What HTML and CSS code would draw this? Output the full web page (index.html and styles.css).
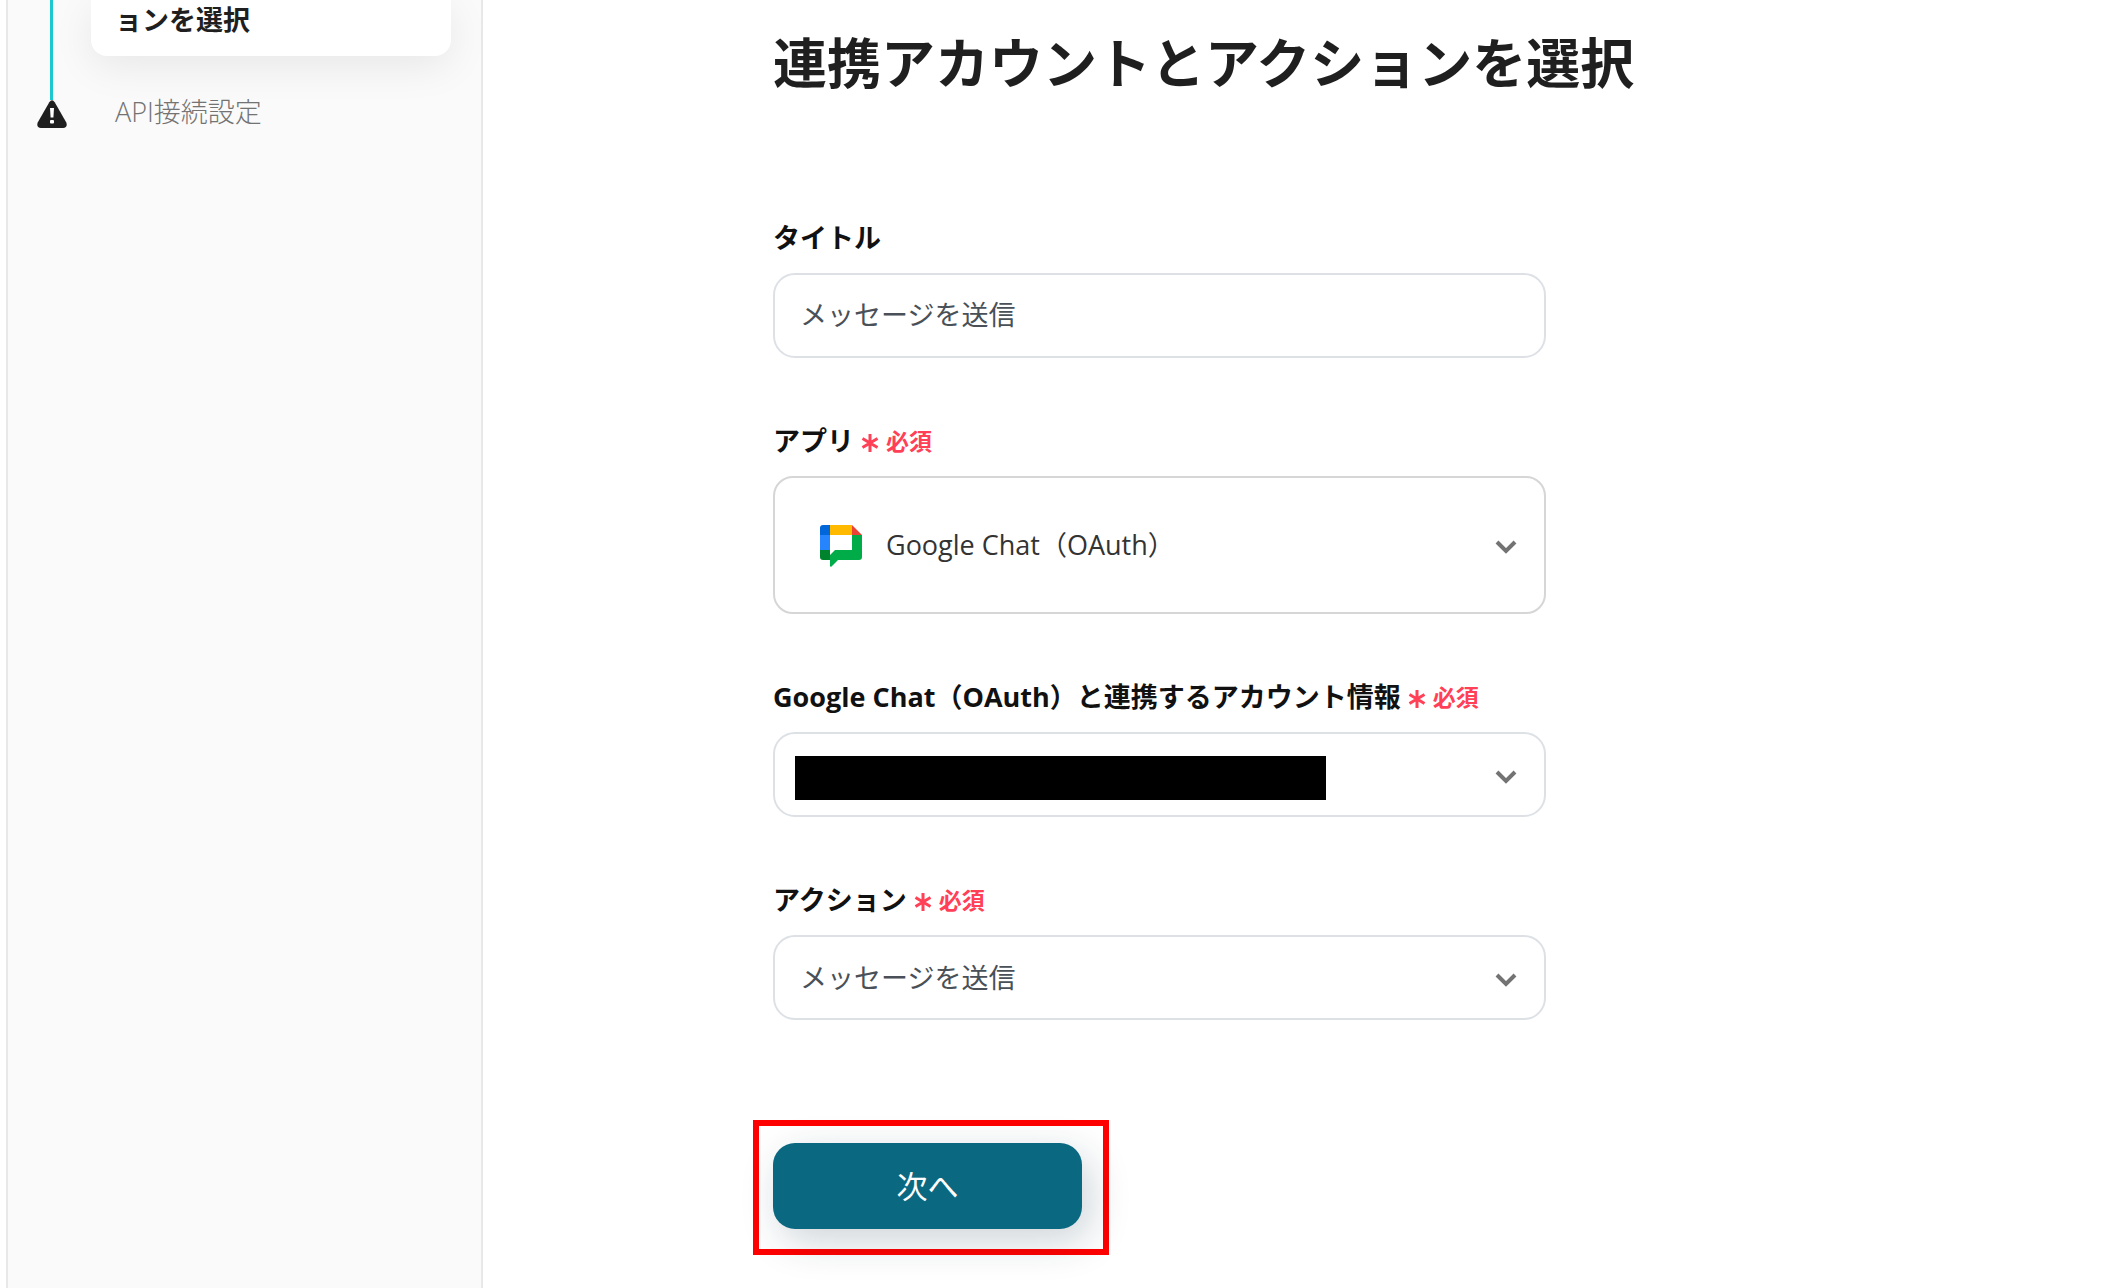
FILE: index.html
```html
<!DOCTYPE html>
<html lang="ja">
<head>
<meta charset="utf-8">
<meta name="viewport" content="width=device-width, initial-scale=1">
<title>連携アカウントとアクションを選択</title>
<link rel="stylesheet" href="styles.css">
</head>
<body>
<div class="page">
  <aside class="sidebar">
    <ol class="steps">
      <li class="step step-current">
        <span class="step-line"></span>
        <span class="step-card">ョンを選択</span>
      </li>
      <li class="step">
        <span class="step-marker">
          <span class="step-line step-line-end"></span>
          <svg class="warning-icon" viewBox="0 0 30 28" aria-hidden="true">
            <path d="M12.300 2.200Q15-1.600 17.700 2.200L29.300 22.500Q31 27.500 26 28H4Q-1 27.500 .700 22.500Z" fill="#1f1f1f"/>
            <path d="M13 8h4l-.600 9.500h-2.800z" fill="#fff"/>
            <rect x="13" y="20" width="4" height="3.500" rx="1" fill="#fff"/>
          </svg>
        </span>
        <span class="step-name">API接続設定</span>
      </li>
    </ol>
  </aside>
  <main class="main">
    <h1 class="heading">連携アカウントとアクションを選択</h1>
    <form class="form">
      <div class="field">
        <label class="label" for="title">タイトル</label>
        <input class="control control-text" id="title" type="text" value="メッセージを送信">
      </div>
      <div class="field">
        <label class="label" for="app">アプリ<span class="required"><svg class="asterisk" viewBox="0 0 18 20" aria-hidden="true"><path d="M9 1v18M1.500 5.500l15 9M16.500 5.500l-15 9"/></svg>必須</span></label>
        <div class="select">
          <select class="control control-app" id="app"><option>Google Chat（OAuth）</option></select>
          <svg class="app-logo" viewBox="0 0 42 42" aria-hidden="true">
            <path d="M0 10V3Q0 0 3 0H10V10Z" fill="#0066da"/>
            <path d="M0 10H10V25H0Z" fill="#2684fc"/>
            <path d="M10 0H32V10H10Z" fill="#ffba00"/>
            <path d="M32 0L42 10H32Z" fill="#ea4335"/>
            <path d="M0 25H10V35H3Q0 35 0 32Z" fill="#00832d"/>
            <path d="M32 10H42V32Q42 35 39 35H18L11.500 41.500Q10 42.500 10 40.500V30L15 25H32Z" fill="#00ac47"/>
          </svg>
          <svg class="chevron" viewBox="0 0 22 14" aria-hidden="true"><path d="M2 2l9 9 9-9"/></svg>
        </div>
      </div>
      <div class="field">
        <label class="label" for="account">Google Chat（OAuth）と連携するアカウント情報<span class="required"><svg class="asterisk" viewBox="0 0 18 20" aria-hidden="true"><path d="M9 1v18M1.500 5.500l15 9M16.500 5.500l-15 9"/></svg>必須</span></label>
        <div class="select">
          <select class="control" id="account"><option></option></select>
          <span class="redaction"></span>
          <svg class="chevron" viewBox="0 0 22 14" aria-hidden="true"><path d="M2 2l9 9 9-9"/></svg>
        </div>
      </div>
      <div class="field">
        <label class="label" for="action">アクション<span class="required"><svg class="asterisk" viewBox="0 0 18 20" aria-hidden="true"><path d="M9 1v18M1.500 5.500l15 9M16.500 5.500l-15 9"/></svg>必須</span></label>
        <div class="select">
          <select class="control" id="action"><option>メッセージを送信</option></select>
          <svg class="chevron" viewBox="0 0 22 14" aria-hidden="true"><path d="M2 2l9 9 9-9"/></svg>
        </div>
      </div>
    </form>
    <div class="highlight">
      <button class="next" type="button">次へ</button>
    </div>
  </main>
</div>
</body>
</html>
```
FILE: styles.css
```css
* {
  box-sizing: border-box;
}

body {
  margin: 0;
  background: #fff;
  color: #1f1f1f;
  font-family: "Open Sans", "Noto Sans CJK JP", sans-serif;
  font-size: 27px;
  line-height: 40px;
}

.page {
  display: flex;
  min-height: 100vh;
  padding-left: 6px;
}

/* Sidebar */
.sidebar {
  flex: 0 0 477px;
  background: #fafafa;
  border-left: 2px solid #e8e8e8;
  border-right: 2px solid #e8e8e8;
}

.steps {
  margin: 0;
  padding: 0;
  list-style: none;
}

.step {
  display: grid;
  grid-template-columns: 83px 1fr;
  padding-right: 30px;
}

.step-line {
  width: 3px;
  margin-left: 42px;
  background: #1cc8cf;
}

.step-card {
  padding: 0 24px 16px;
  border-radius: 0 0 16px 16px;
  background: #fff;
  box-shadow: 0 10px 40px rgba(0, 0, 0, 0.08);
  font-weight: 700;
}

.step-marker {
  display: flex;
  flex-direction: column;
}

.step-line-end {
  height: 44px;
}

.warning-icon {
  width: 30px;
  height: 28px;
  margin-left: 29px;
}

.step-name {
  padding: 36px 24px 0;
  color: #737373;
  font-weight: 300;
}

/* Form */
.main {
  flex: 1;
  padding: 23px 290px 24px;
}

.heading {
  margin: 0 0 115px;
  font-size: 54px;
  line-height: 80px;
  white-space: nowrap;
}

.form {
  display: flex;
  flex-direction: column;
  gap: 63px;
  max-width: 773px;
}

.field {
  display: flex;
  flex-direction: column;
  gap: 15px;
}

.label {
  display: flex;
  align-items: center;
  color: #111;
  font-weight: 700;
}

.required {
  display: flex;
  align-items: center;
  gap: 7px;
  margin-left: 7px;
  color: #ff4056;
  font-size: 23px;
}

.asterisk {
  width: 18px;
  height: 20px;
  margin-top: 4px;
  fill: none;
  stroke: currentColor;
  stroke-width: 3;
}

.control {
  width: 100%;
  height: 85px;
  padding: 0 25px;
  border: 2px solid #dde1e6;
  border-radius: 22px;
  background: #fff;
  color: #495057;
  font: inherit;
  appearance: none;
}

.control-text {
  padding-bottom: 4px;
}

.select {
  display: grid;
  align-items: center;
}

.select > * {
  grid-area: 1 / 1;
}

.control-app {
  height: 138px;
  padding-left: 111px;
  border-color: #d6d6d6;
  border-radius: 20px;
  color: #333;
}

.app-logo {
  width: 42px;
  height: 42px;
  margin: 2px 0 0 47px;
  pointer-events: none;
}

.redaction {
  width: 531px;
  max-width: 80%;
  height: 44px;
  margin: 6px 0 0 22px;
  background: #000;
  pointer-events: none;
}

.chevron {
  justify-self: end;
  width: 22px;
  height: 14px;
  margin: 4px 29px 0 0;
  fill: none;
  stroke: #737373;
  stroke-width: 4;
  pointer-events: none;
}

.highlight {
  width: fit-content;
  margin: 100px 0 0 -20px;
  padding: 17px 21px 20px 14px;
  border: 6px solid #f00;
}

.next {
  display: block;
  width: 309px;
  height: 86px;
  border: 0;
  border-radius: 22px;
  background: #0b6881;
  box-shadow: 8px 12px 40px rgba(11, 40, 60, 0.2);
  color: #fff;
  font: inherit;
  font-size: 31px;
}
```
